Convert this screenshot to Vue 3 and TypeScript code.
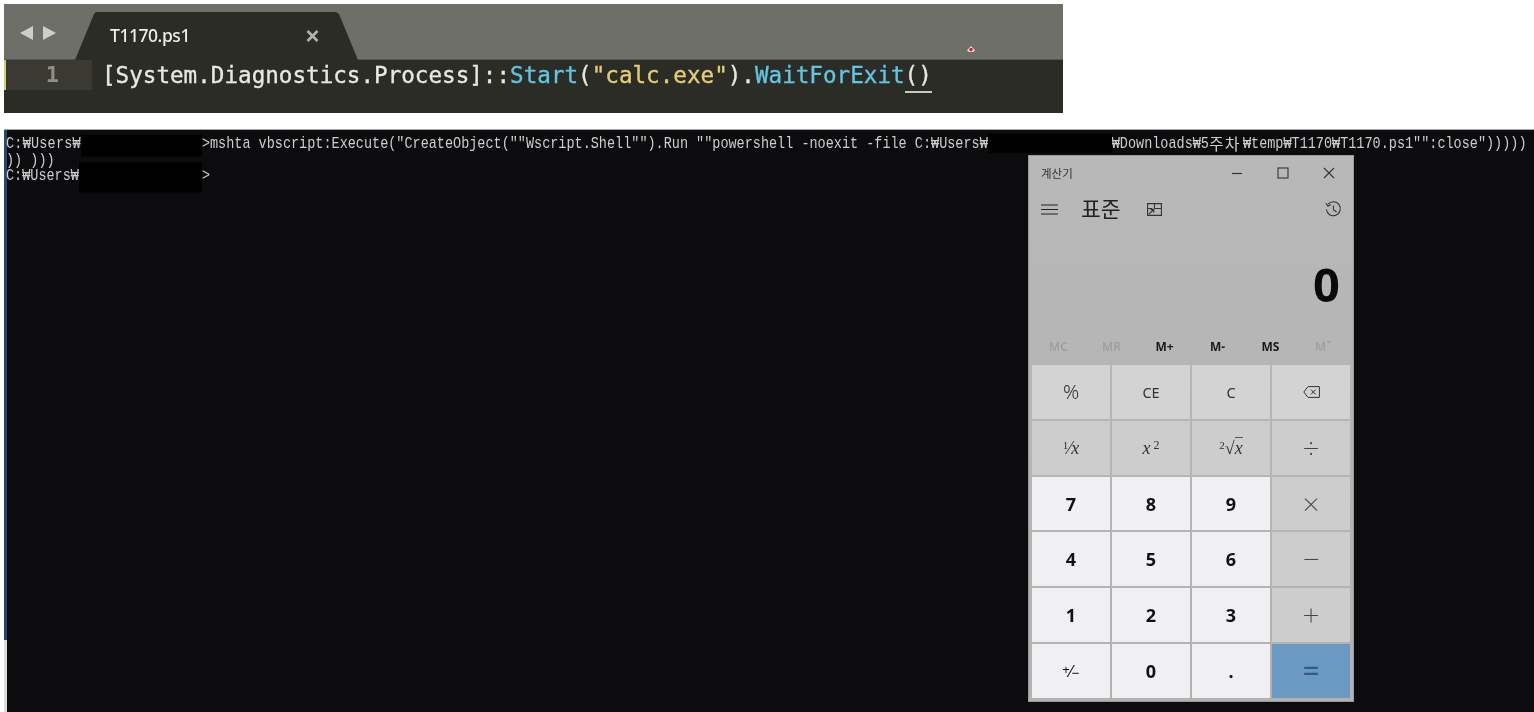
<script setup lang="ts">
interface Key { label: string; kind: 'fn' | 'top' | 'num' | 'op' | 'eq'; math?: string }

const memory: { label: string; on: boolean }[] = [
  { label: 'MC', on: false },
  { label: 'MR', on: false },
  { label: 'M+', on: true },
  { label: 'M-', on: true },
  { label: 'MS', on: true },
  { label: 'Mˇ', on: false },
]

const keys: Key[] = [
  { label: '%', kind: 'top' },
  { label: 'CE', kind: 'top' },
  { label: 'C', kind: 'top' },
  { label: '', kind: 'top', math: 'back' },
  { label: '', kind: 'fn', math: 'inv' },
  { label: '', kind: 'fn', math: 'sq' },
  { label: '', kind: 'fn', math: 'root' },
  { label: '÷', kind: 'op' },
  { label: '7', kind: 'num' },
  { label: '8', kind: 'num' },
  { label: '9', kind: 'num' },
  { label: '×', kind: 'op' },
  { label: '4', kind: 'num' },
  { label: '5', kind: 'num' },
  { label: '6', kind: 'num' },
  { label: '−', kind: 'op' },
  { label: '1', kind: 'num' },
  { label: '2', kind: 'num' },
  { label: '3', kind: 'num' },
  { label: '+', kind: 'op' },
  { label: '', kind: 'num', math: 'neg' },
  { label: '0', kind: 'num' },
  { label: '.', kind: 'num' },
  { label: '=', kind: 'eq' },
]
</script>

<template>
  <div class="page">
    <section class="editor">
      <header class="tabbar">
        <div class="arrows">
          <svg width="36" height="14" viewBox="0 0 36 14">
            <path d="M13 0V14L0 7Z" fill="#cfcfca" />
            <path d="M23 0V14L36 7Z" fill="#cfcfca" />
          </svg>
        </div>
        <div class="tab">
          <span class="tab-name">T1170.ps1</span>
          <svg class="tab-close" width="13" height="12" viewBox="0 0 13 12">
            <path d="M1.5 1L11.5 11M11.5 1L1.5 11" stroke="#b4b4ae" stroke-width="2.6" fill="none" />
          </svg>
        </div>
        <svg class="cursor-mark" width="8" height="6" viewBox="0 0 8 6">
          <path d="M4 0L8 4.5L6 6H2L0 4.5Z" fill="#f0e6e0" />
          <circle cx="4" cy="3.6" r="1.8" fill="#c8242a" />
        </svg>
      </header>
      <div class="code-row">
        <div class="gutter">1</div>
        <code class="code"><span class="w">[System.Diagnostics.Process]::</span><span class="b">Start</span><span class="w">(</span><span class="y">"calc.exe"</span><span class="w">).</span><span class="b">WaitForExit</span><span class="w match">()</span></code>
      </div>
    </section>

    <section class="terminal">
      <div class="term-text">
        <div class="term-line"><span class="pfx">C:₩Users₩</span><span class="mask mask-a"></span>&gt;mshta vbscript:Execute("CreateObject(""Wscript.Shell"").Run ""powershell -noexit -file C:₩Users₩<span class="mask mask-b"></span>₩Downloads₩5<span class="ko">주차</span>₩temp₩T1170₩T1170.ps1"":close")))))</div>
        <div class="term-line">)) )))</div>
        <div class="term-line">C:₩Users₩<span class="mask mask-c"></span>&gt;</div>
      </div>

      <div class="calc">
        <div class="calc-title">
          <span class="calc-name">계산기</span>
          <div class="win-btns">
            <svg width="12" height="12" viewBox="0 0 12 12"><path d="M1 6.5H11" stroke="#333" stroke-width="1.2" /></svg>
            <svg width="12" height="12" viewBox="0 0 12 12"><rect x="1" y="1" width="10" height="10" fill="none" stroke="#333" stroke-width="1.1" /></svg>
            <svg width="12" height="12" viewBox="0 0 12 12"><path d="M1 1L11 11M11 1L1 11" stroke="#333" stroke-width="1.1" /></svg>
          </div>
        </div>
        <div class="calc-head">
          <svg width="17" height="11" viewBox="0 0 17 11"><path d="M0 1H17M0 5.5H17M0 10H17" stroke="#222" stroke-width="1.1" /></svg>
          <span class="mode">표준</span>
          <svg class="keep" width="15" height="13" viewBox="0 0 15 13">
            <path d="M.6.6H14.4V12.4H.6Z M7.5.6V5.5H14.4 M.6 5.5H5.5 M2 11L6.5 6.8M3.5 6.6H6.8V9.8" fill="none" stroke="#333" stroke-width="1.1" />
          </svg>
          <svg class="history" width="17" height="17" viewBox="0 0 17 17">
            <path d="M3 3.2A7 7 0 1 1 1.4 8.5M1 2.4L3 5.2L5.8 3.6M8.4 4.6V8.6L11.6 11" fill="none" stroke="#333" stroke-width="1.1" />
          </svg>
        </div>
        <div class="display">0</div>
        <div class="memory">
          <span v-for="m in memory" :key="m.label" :class="{ on: m.on }">{{ m.label }}</span>
        </div>
        <div class="keys">
          <div v-for="(k, i) in keys" :key="i" class="key" :class="k.kind">
            <svg v-if="k.math === 'back'" width="17" height="12" viewBox="0 0 17 12">
              <path d="M5 .6H16.4V11.4H5L.8 6Z M8 3.6L12.6 8.4M12.6 3.6L8 8.4" fill="none" stroke="#333" stroke-width="1" />
            </svg>
            <span v-else-if="k.math === 'inv'" class="mth"><sup>1</sup>⁄<i>x</i></span>
            <span v-else-if="k.math === 'sq'" class="mth"><i>x</i><sup class="wide">2</sup></span>
            <span v-else-if="k.math === 'root'" class="mth"><sup>2</sup>√<i class="over">x</i></span>
            <span v-else-if="k.math === 'neg'" class="neg"><sup>+</sup>⁄<sub>−</sub></span>
            <template v-else>{{ k.label }}</template>
          </div>
        </div>
      </div>
    </section>
  </div>
</template>

<style>
html, body { margin: 0; background: #fff; overflow: hidden; }
</style>

<style scoped>
.page {
  width: 1534px;
  height: 712px;
  background: #fff;
  padding: 4px 0 0 4px;
  box-sizing: border-box;
  display: flex;
  flex-direction: column;
  gap: 16px;
  overflow: hidden;
}
.editor { width: 1059px; height: 109px; background: #2b2c26; display: flex; flex-direction: column; filter: blur(.35px); }
.tabbar { height: 56px; background: #6e6f68; display: flex; position: relative; border-bottom: 1px solid #55564f; box-sizing: border-box; }
.arrows { width: 71px; padding: 22px 0 0 16px; box-sizing: border-box; }
.tab {
  width: 283px;
  height: 48px;
  margin-top: 8px;
  background: #2b2c26;
  clip-path: polygon(0 100%, 19px 2px, 21px 0, 261px 0, 264px 2px, 283px 100%);
  display: flex;
  align-items: center;
  padding: 0 0 0 35px;
  box-sizing: border-box;
  position: relative;
}
.tab-name { font: 500 17.5px/20px "Noto Sans", sans-serif; color: #eeeee6; letter-spacing: -.45px; margin-top: -2px; }
.tab-close { position: absolute; left: 231px; top: 18px; }
.cursor-mark { position: absolute; left: 963px; top: 42px; }
.code-row { display: flex; height: 30px; }
.gutter {
  width: 88px;
  box-sizing: border-box;
  background: #3a3a32;
  border-left: 2px solid #d8cf78;
  color: #8f8f86;
  font: 700 22px/30px "DejaVu Sans Mono", monospace;
  text-align: right;
  padding-right: 33px;
}
.code { margin-left: 10px; font: 22.6px/30px "DejaVu Sans Mono", monospace; white-space: pre; -webkit-text-stroke: .35px; }
.w { color: #e8e8e0; }
.b { color: #62c4e0; }
.y { color: #e2ce7a; }
.match { border-bottom: 2px solid #c8c8c0; padding-bottom: 3px; }

.terminal {
  flex: 1;
  position: relative;
  background: #0c0c0e;
  border-top: 1px solid #a8a8a8;
  min-height: 0;
}
.terminal::before {
  content: "";
  position: absolute;
  left: 0;
  top: 0;
  bottom: 0;
  width: 3px;
  background: linear-gradient(#2a4668 510px, #dcdcdc 510px);
}
.term-text {
  padding: 5.4px 0 0 2px;
  font: 13.5px/13.33px "Liberation Mono", "Noto Sans CJK KR", monospace;
  color: #cdcdcd;
  white-space: pre;
  transform: scaleY(1.2);
  transform-origin: top;
  filter: blur(.3px);
}
.term-line { height: 13.33px; }
.pfx { letter-spacing: .22px; }
.mask { display: inline-block; position: relative; height: 13.33px; vertical-align: top; }
.mask::before { content: ""; position: absolute; left: 0; right: 0; background: #000; }
.mask-a { width: 121px; }
.mask-a::before { top: -1.25px; height: 17.5px; }
.mask-b { width: 124px; }
.mask-b::before { top: -2.08px; height: 15.83px; }
.mask-c { width: 123px; }
.mask-c::before { top: -5.42px; height: 25px; }
.ko { display: inline-block; font-size: 16px; width: 34px; letter-spacing: 1px; line-height: 13.33px; vertical-align: top; margin-top: 2px; transform: scaleY(.83); }

.calc {
  position: absolute;
  left: 1024px;
  top: 25px;
  width: 326px;
  height: 547px;
  box-sizing: border-box;
  background: linear-gradient(#b8b8b8, #b2b2b2);
  border: 1px solid #9a9a9a;
  padding: 0 3px 3px;
  display: flex;
  flex-direction: column;
  font-family: "Noto Sans", "Noto Sans CJK KR", sans-serif;
  filter: blur(.35px);
}
.calc-title { height: 33px; display: flex; align-items: center; justify-content: space-between; padding: 0 15px 0 9px; color: #333; }
.calc-name { font-size: 11.5px; }
.win-btns { display: flex; gap: 34px; }
.calc-head { height: 40px; display: flex; align-items: center; padding-left: 9px; }
.mode { font-size: 21.5px; color: #222; margin-left: 23px; line-height: 1; }
.keep { margin-left: 26px; }
.history { margin-left: auto; margin-right: 8px; }
.display { height: 99px; font-size: 47px; font-weight: 700; color: #0a0a0a; text-align: right; line-height: 110px; padding-right: 10px; }
.memory { height: 37px; display: grid; grid-template-columns: repeat(6, 1fr); align-items: center; text-align: center; font-size: 12px; font-weight: 600; color: #9f9f9f; }
.memory .on { color: #1a1a1a; font-weight: 700; }
.keys { height: 333px; display: grid; grid-template-columns: repeat(4, 78px); grid-template-rows: repeat(6, 1fr); gap: 2px; }
.key { display: flex; align-items: center; justify-content: center; color: #222; }
.top { background: #d3d3d3; font-size: 14.5px; color: #333; }
.top:first-child { font-size: 20px; font-weight: 300; }
.fn { background: #cdcdcd; }
.num { background: #f0f0f2; font-size: 18px; font-weight: 700; color: #111; }
.op { background: #cdcdcd; font-size: 30px; font-weight: 200; color: #444; line-height: 1; }
.eq { background: #6a9ac4; font-size: 30px; font-weight: 400; color: #3a5a78; line-height: 1; }
.mth { font: 18px/1 "Liberation Serif", serif; color: #333; white-space: nowrap; }
.mth sup { font-size: 11px; vertical-align: 5px; line-height: 0; }
.mth .wide { margin-left: 3px; font-size: 12px; }
.over { border-top: 1px solid #555; }
.neg { font-size: 16px; font-weight: 400; color: #111; white-space: nowrap; }
.neg sup { font-size: 13px; vertical-align: 3px; line-height: 0; }
.neg sub { font-size: 14px; vertical-align: -1px; line-height: 0; }
</style>
